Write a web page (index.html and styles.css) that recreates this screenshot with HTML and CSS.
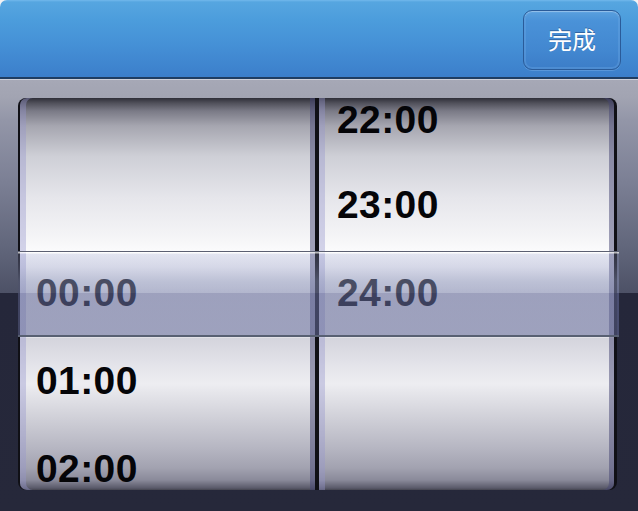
FILE: index.html
```html
<!DOCTYPE html>
<html lang="zh">
<head>
<meta charset="utf-8">
<title>Picker</title>
<link rel="stylesheet" href="styles.css">
</head>
<body>
<div class="screen">
  <header class="toolbar">
    <button class="done" type="button">完成</button>
  </header>
  <div class="picker">
    <div class="wheels">
      <div class="wheel wheel-left">
        <ul class="rows">
          <li></li>
          <li></li>
          <li>00:00</li>
          <li>01:00</li>
          <li>02:00</li>
        </ul>
      </div>
      <div class="wheel wheel-right">
        <ul class="rows">
          <li>22:00</li>
          <li>23:00</li>
          <li>24:00</li>
          <li></li>
          <li></li>
        </ul>
      </div>
    </div>
    <div class="selection"></div>
  </div>
</div>
</body>
</html>
```

FILE: styles.css
```css
html, body {
  margin: 0;
  padding: 0;
  background: #f2f2f4;
}

.screen {
  width: 638px;
  height: 511px;
  overflow: hidden;
  display: flex;
  flex-direction: column;
}

.toolbar {
  height: 79px;
  flex: none;
  display: flex;
  justify-content: flex-end;
  align-items: flex-start;
  padding: 10px 17px 0 0;
  box-sizing: border-box;
  border-radius: 7px 7px 0 0;
  background: linear-gradient(to bottom, #72b8ec 0, #56a6e0 2px, #4c9ddc 20px, #4590d6 45px, #3c7fcb 76px);
  border-bottom: 2px solid #1f3d62;
}

.done {
  width: 98px;
  height: 60px;
  box-sizing: border-box;
  border: 1px solid #2a5b99;
  border-radius: 9px;
  background: linear-gradient(to bottom, #5aa0de 0, #4a92d8 10px, #4287d0 40px, #3c7dc8 58px);
  box-shadow: inset 0 1px 0 rgba(255,255,255,0.3), inset 0 0 0 2px rgba(110,170,230,0.35), 0 1px 0 rgba(140,190,240,0.35);
  color: #ffffff;
  font-family: "Noto Sans CJK SC", "Noto Sans CJK JP", sans-serif;
  font-size: 24px;
  line-height: 1;
  padding: 0 0 2px 0;
  text-shadow: 0 -1px 0 rgba(20,50,100,0.45);
}

.picker {
  position: relative;
  flex: 1;
  border-top: 1px solid #cdd0da;
  padding: 18px 21px 0 18px;
  background: linear-gradient(to bottom, #a6a8b6 0, #a2a4b2 17px, #9396a8 40px, #7c8095 100px, #60657a 170px, #4d5166 213px, #25273a 213px, #26283a 100%);
}

.wheels {
  height: 392px;
  display: flex;
  gap: 4px;
  padding: 0 3px 0 2px;
  background: #101016;
  border-radius: 8px;
  overflow: hidden;
}

.wheel {
  flex: 1;
  overflow: hidden;
  background: linear-gradient(to bottom,
    #2e2e38 0,
    #50505a 5px,
    #7a7a86 13px,
    #a6a6b0 28px,
    #cecfd6 58px,
    #e6e6eb 100px,
    #f5f5f7 140px,
    #fbfbfc 153px,
    #f0f0f3 239px,
    #d4d4dc 240px,
    #e4e4ea 268px,
    #ededf1 286px,
    #d0d0d8 320px,
    #b6b6c2 350px,
    #a2a2b0 370px,
    #8a8a9a 382px,
    #5a5a6a 390px,
    #44444f 392px);
  box-shadow: inset 6px 0 0 rgba(150,150,205,0.4), inset -5px 0 0 rgba(70,70,115,0.5);
}

.wheel-left {
  border-radius: 7px 0 0 7px;
}

.wheel-right {
  border-radius: 0 7px 7px 0;
}

.rows {
  list-style: none;
  margin: 0;
  padding: 0;
}

.rows li {
  height: 88px;
  line-height: 88px;
  font-family: "Liberation Sans", Arial, sans-serif;
  font-weight: bold;
  font-size: 39px;
  letter-spacing: 0.4px;
  color: #050508;
}

.rows li:first-child {
  height: 63px;
  line-height: 44px;
}

.wheel-left .rows li {
  padding-left: 16px;
}

.wheel-right .rows li {
  padding-left: 18px;
}

.selection {
  position: absolute;
  top: 171px;
  left: 18px;
  width: 601px;
  height: 86px;
  box-sizing: border-box;
  border-top: 1px solid #5c6072;
  border-bottom: 2px solid #586072;
  background: linear-gradient(to bottom,
    rgba(255,255,255,0.7) 0,
    rgba(255,255,255,0.7) 1px,
    rgba(150,158,205,0.24) 2px,
    rgba(145,152,195,0.34) 15px,
    rgba(136,144,182,0.52) 29px,
    rgba(125,132,172,0.56) 41px,
    rgba(98,104,150,0.6) 41px,
    rgba(98,104,150,0.58) 100%);
}
```
